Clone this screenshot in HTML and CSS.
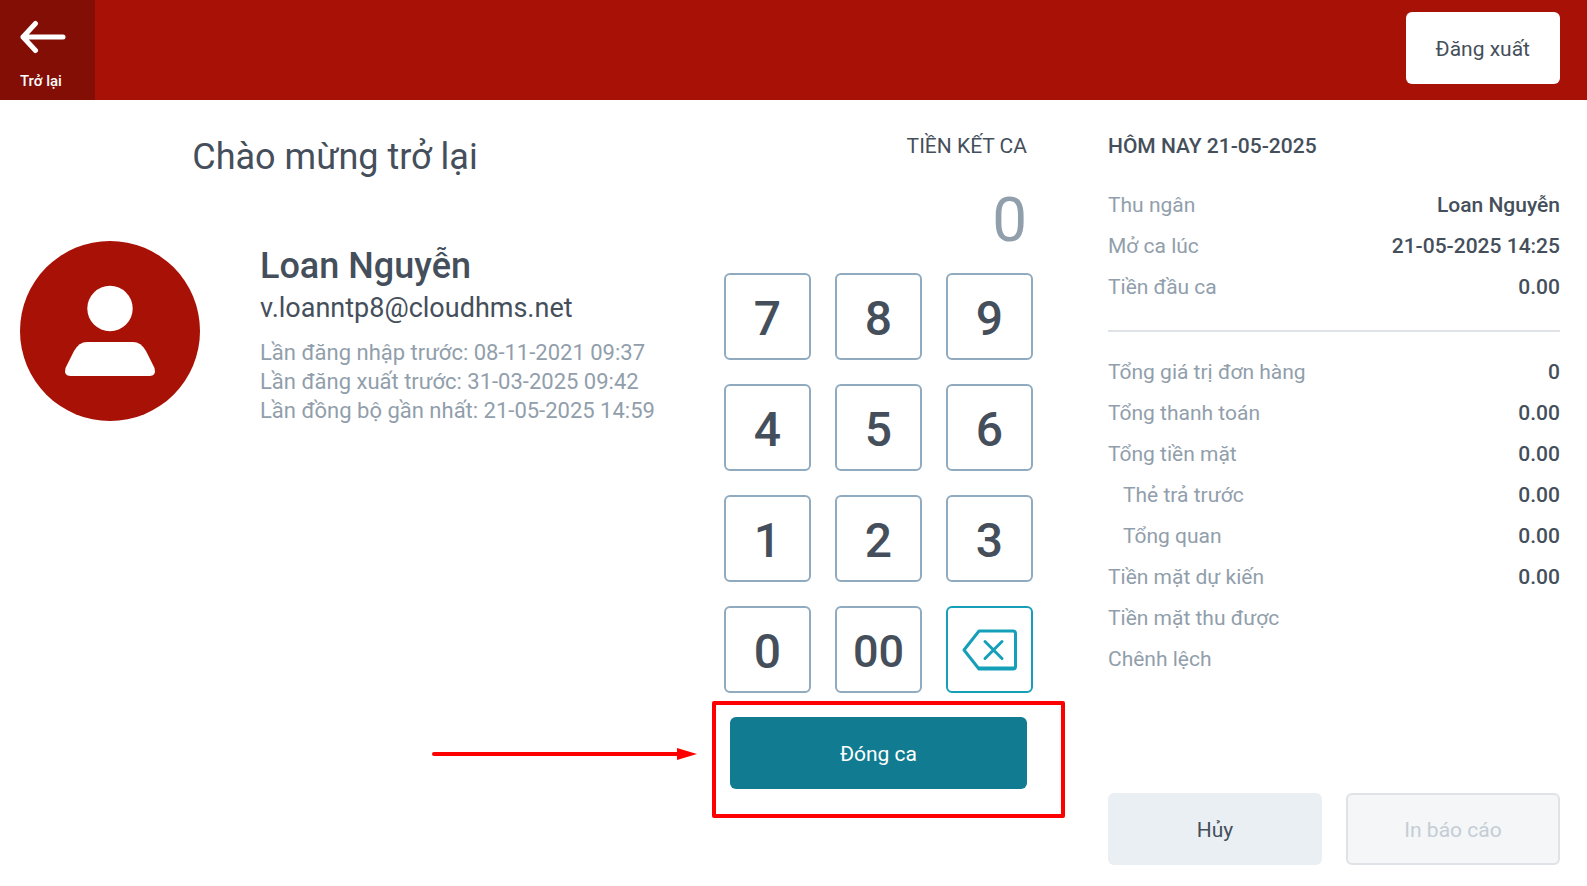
FILE: index.html
```
<!DOCTYPE html>
<html lang="vi">

	<head>
		<meta charset="UTF-8">
		<title>Đóng ca</title>
		<meta name="viewport" content="width=device-width,initial-scale=1">
		<link rel="stylesheet" href="styles.css">
	</head>

	<body>
		<header class="header">
			<button type="button" class="btn-back">
				<svg class="icon-back" viewBox="0 0 46 34" aria-hidden="true">
					<path d="M15.500 3.500L3 17l12.500 13.500M3 17h40" />
				</svg>
				<span>Trở lại</span>
			</button>
			<button type="button" class="btn btn-logout">Đăng xuất</button>
		</header>

		<main class="main">
			<section class="welcome">
				<h1 class="welcome-title">Chào mừng trở lại</h1>
				<div class="user">
					<svg class="avatar" viewBox="0 0 180 180" aria-hidden="true">
						<circle class="avatar-bg" cx="90" cy="90" r="90" />
						<circle cx="90" cy="67.500" r="22.700" />
						<path d="M67 101h46q8 0 13 9l8.500 17q2 8-5 8h-79q-7 0-5-8l8.500-17q5-9 13-9z" />
					</svg>
					<div class="user-info">
						<h2 class="user-name">Loan Nguyễn</h2>
						<p class="user-mail">v.loanntp8@cloudhms.net</p>
						<ul class="user-log">
							<li>Lần đăng nhập trước: 08-11-2021 09:37</li>
							<li>Lần đăng xuất trước: 31-03-2025 09:42</li>
							<li>Lần đồng bộ gần nhất: 21-05-2025 14:59</li>
						</ul>
					</div>
				</div>
			</section>

			<section class="cash">
				<label class="cash-label" for="cash">TIỀN KẾT CA</label>
				<input class="cash-value" id="cash" type="text" value="0" readonly>
				<div class="keypad">
					<button type="button" class="key">7</button>
					<button type="button" class="key">8</button>
					<button type="button" class="key">9</button>
					<button type="button" class="key">4</button>
					<button type="button" class="key">5</button>
					<button type="button" class="key">6</button>
					<button type="button" class="key">1</button>
					<button type="button" class="key">2</button>
					<button type="button" class="key">3</button>
					<button type="button" class="key">0</button>
					<button type="button" class="key key-double">00</button>
					<button type="button" class="key key-delete" aria-label="Xóa">
						<svg class="icon-delete" viewBox="0 0 56 42" aria-hidden="true">
							<path d="M17 2h34q2.500 0 2.500 2.500v33q0 2.500-2.500 2.500H17L2 21z" />
							<path d="M17 39h35" />
							<path d="M23 12.500l17 17M40 12.500l-17 17" />
						</svg>
					</button>
				</div>
				<div class="close-shift">
					<button type="button" class="btn btn-primary">Đóng ca</button>
					<div class="mark-frame"></div>
					<svg class="mark-arrow" viewBox="0 0 266 14" aria-hidden="true">
						<path class="mark-line" d="M3 7h243" />
						<path class="mark-head" d="M246 1l20 6-20 6z" />
					</svg>
				</div>
			</section>

			<section class="report">
				<h2 class="report-title">HÔM NAY 21-05-2025</h2>
				<table class="report-table">
					<tr><th scope="row">Thu ngân</th><td>Loan Nguyễn</td></tr>
					<tr><th scope="row">Mở ca lúc</th><td>21-05-2025 14:25</td></tr>
					<tr><th scope="row">Tiền đầu ca</th><td>0.00</td></tr>
				</table>
				<hr class="line">
				<table class="report-table">
					<tr><th scope="row">Tổng giá trị đơn hàng</th><td>0</td></tr>
					<tr><th scope="row">Tổng thanh toán</th><td>0.00</td></tr>
					<tr><th scope="row">Tổng tiền mặt</th><td>0.00</td></tr>
					<tr class="sub"><th scope="row">Thẻ trả trước</th><td>0.00</td></tr>
					<tr class="sub"><th scope="row">Tổng quan</th><td>0.00</td></tr>
					<tr><th scope="row">Tiền mặt dự kiến</th><td>0.00</td></tr>
					<tr><th scope="row">Tiền mặt thu được</th><td></td></tr>
					<tr><th scope="row">Chênh lệch</th><td></td></tr>
				</table>
				<div class="report-btns">
					<button type="button" class="btn btn-cancel">Hủy</button>
					<button type="button" class="btn btn-print" disabled>In báo cáo</button>
				</div>
			</section>
		</main>
	</body>

</html>
```

FILE: styles.css
```
*{
	padding: 0;
	margin: 0;
	box-sizing: border-box;
}
body{
	display: flex;
	flex-direction: column;
	min-height: 100vh;
	background: #fff;
	color: #454f5b;
	font-family: Roboto, "Noto Sans", sans-serif;
	font-size: 21px;
	line-height: 24px;
}
button,input{
	font: inherit;
	color: inherit;
	border: none;
	background: none;
}
button{
	cursor: pointer;
}
ul{
	list-style: none;
}

.btn{
	height: 72px;
	padding: 2px 30px 0;
	border-radius: 6px;
	text-align: center;
}

/* header */
.header{
	display: flex;
	justify-content: space-between;
	height: 100px;
	padding-right: 27px;
	background: #a81106;
}
.btn-back{
	display: flex;
	flex-direction: column;
	align-items: flex-start;
	justify-content: flex-start;
	gap: 15px;
	width: 95px;
	padding: 20px 20px 0;
	background: #820e05;
	color: #fff;
	font-size: 15px;
	font-weight: 500;
}
.icon-back{
	flex: none;
	width: 46px;
	height: 34px;
	fill: none;
	stroke: #fff;
	stroke-width: 5;
	stroke-linecap: round;
	stroke-linejoin: round;
}
.btn-logout{
	margin-top: 12px;
	background: #fff;
}

/* columns */
.main{
	flex: 1;
	display: grid;
	grid-template-columns: minmax(0, 1fr) 417px 500px;
}

.welcome{
	padding: 36px 0 21px;
}
.welcome-title{
	text-align: center;
	font-size: 36px;
	font-weight: 400;
	line-height: 42px;
}
.user{
	display: flex;
	gap: 60px;
	margin-top: 63px;
	padding-left: 20px;
}
.avatar{
	flex: none;
	width: 180px;
	height: 180px;
	fill: #fff;
}
.avatar-bg{
	fill: #a81106;
}
.user-info{
	padding-top: 4px;
}
.user-name{
	font-size: 36px;
	font-weight: 500;
	line-height: 42px;
}
.user-mail{
	margin-top: 3px;
	font-size: 27px;
	line-height: 36px;
}
.user-log{
	margin-top: 12px;
	font-size: 22px;
	line-height: 29px;
	color: #919eab;
}

/* closing cash */
.cash{
	padding: 34px 54px 21px;
}
.cash-label{
	display: block;
	padding-right: 6px;
	text-align: right;
}
.cash-value{
	display: block;
	width: 100%;
	height: 72px;
	margin: 26px 0 17px;
	padding-right: 6px;
	font-size: 62px;
	line-height: 72px;
	text-align: right;
	color: #919eab;
	outline: none;
}
.keypad{
	display: grid;
	grid-template-columns: repeat(3, 1fr);
	gap: 24px;
}
.key{
	display: flex;
	align-items: center;
	justify-content: center;
	height: 87px;
	padding-top: 4px;
	border: 2px solid #90abc0;
	border-radius: 6px;
	font-size: 48px;
	font-weight: 500;
}
.key-double{
	font-size: 45px;
}
.key-delete{
	padding-top: 0;
	border-color: #159fb9;
}
.icon-delete{
	width: 56px;
	height: 42px;
	fill: none;
	stroke: #159fb9;
	stroke-width: 3;
	stroke-linecap: round;
	stroke-linejoin: round;
}
.close-shift{
	position: relative;
	margin: 24px 6px 0;
}
.btn-primary{
	display: block;
	width: 100%;
	background: #117c91;
	color: #fff;
}
/* red frame and arrow over the button */
.mark-frame{
	position: absolute;
	top: -16px;
	right: -38px;
	bottom: -29px;
	left: -18px;
	border: 4px solid #f00;
	border-radius: 2px;
	pointer-events: none;
}
.mark-arrow{
	position: absolute;
	top: 30px;
	right: 100%;
	width: 266px;
	height: 14px;
	margin-right: 33px;
}
.mark-line{
	stroke: #f00;
	stroke-width: 4;
	stroke-linecap: round;
}
.mark-head{
	fill: #f00;
}

/* report */
.report{
	display: flex;
	flex-direction: column;
	padding: 34px 27px 21px 21px;
}
.report-title{
	margin-bottom: 26px;
	font-size: 21px;
	font-weight: 500;
}
.report-table{
	width: 100%;
	border-collapse: collapse;
}
.report-table tr{
	height: 41px;
}
.report-table th{
	font-weight: 400;
	text-align: left;
	color: #919eab;
}
.report-table td{
	font-weight: 500;
	text-align: right;
}
.report-table .sub th{
	padding-left: 15px;
}
.line{
	height: 2px;
	margin: 23px 0 19px;
	border: none;
	background: #dfe3e8;
}
.report-btns{
	display: grid;
	grid-template-columns: 1fr 1fr;
	gap: 24px;
	margin-top: auto;
}
.btn-cancel{
	background: #eaeff3;
}
.btn-print{
	border: 2px solid #dfe3e8;
	background: #f4f6f8;
	color: #c4cdd5;
	cursor: default;
}
```
